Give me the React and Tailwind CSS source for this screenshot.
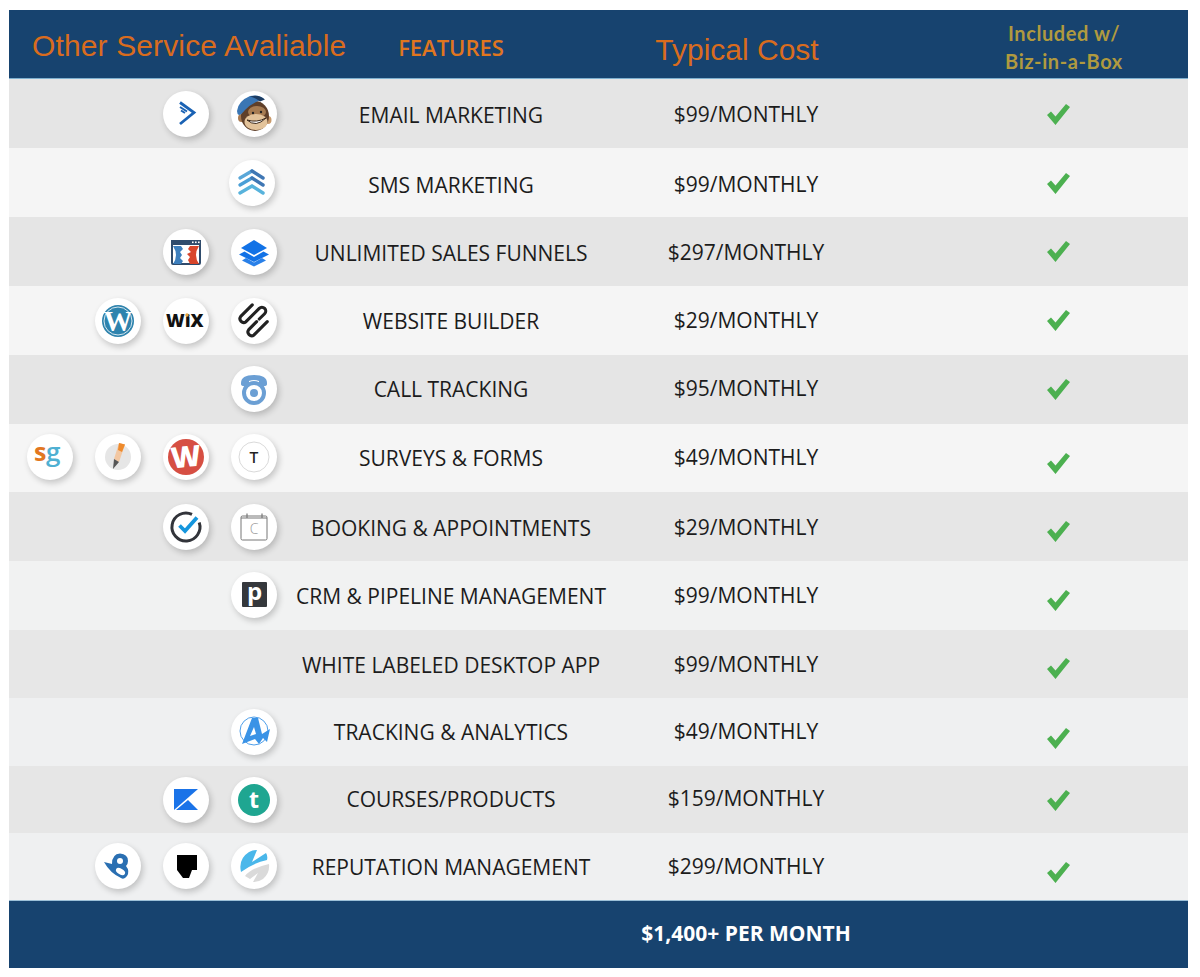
import React from "react";

const Svg = ({ children }) => (
  <svg viewBox="0 0 46 46" className="w-[46px] h-[46px] block">{children}</svg>
);

const Active = () => (
  <Svg>
    <path d="M17 11.5 L31 21.5 L17 33" fill="none" stroke="#1a62b4" strokeWidth="2.8" />
    <path d="M17 16 L24 20.5 M18 19.5 L22 22" fill="none" stroke="#1a62b4" strokeWidth="2" />
  </Svg>
);
const Chimp = () => (
  <Svg>
    <ellipse cx="10.5" cy="27" rx="3.5" ry="4" fill="#a8794f" />
    <ellipse cx="37" cy="29" rx="3.5" ry="4" fill="#c99a6b" />
    <ellipse cx="24" cy="25" rx="14" ry="15" fill="#5f3f29" />
    <ellipse cx="26" cy="21" rx="9" ry="6" fill="#a77c52" />
    <ellipse cx="25" cy="31" rx="11.5" ry="8" fill="#e3c39a" />
    <path d="M16 29 Q25 37 35 27 Q26 32 16 29Z" fill="#fff" stroke="#3a2718" strokeWidth="1" />
    <circle cx="22" cy="22" r="1.2" fill="#222" />
    <circle cx="30" cy="21" r="1.2" fill="#222" />
    <path d="M6 20 Q7 10 19 5 Q28 3 33 8 Q22 11 14 19 Q10 24 8 24 Q6 23 6 20Z" fill="#3a76b4" />
    <path d="M19 5.5 Q28 3 34 8.5 L29 10.5 Q25 7 19 5.5Z" fill="#1d3d63" />
  </Svg>
);
const Sms = () => (
  <Svg>
    <g fill="none" strokeWidth="3.4" strokeLinecap="round">
      <path d="M11 18 L23 11" stroke="#5aa7d8" />
      <path d="M11 25 L23 18" stroke="#4a9fd6" />
      <path d="M11 33 L23 26 L34 33" stroke="#58b3dc" />
    </g>
    <path d="M23 11 L34 18 M23 18 L34 25" stroke="#3f77b4" strokeWidth="3.4" strokeLinecap="round" />
  </Svg>
);
const Click = () => (
  <Svg>
    <rect x="9" y="12" width="28" height="23" rx="1" fill="#fff" stroke="#2f4b6c" strokeWidth="2" />
    <rect x="8" y="11" width="30" height="5" fill="#2f4b6c" />
    <g fill="#fff"><rect x="29" y="12.5" width="1.6" height="1.6" /><rect x="32" y="12.5" width="1.6" height="1.6" /><rect x="35" y="12.5" width="1.6" height="1.6" /></g>
    <path d="M10 17 H18 L20 20 L17 23 L19 26 L17 29 L20 32 L18 35 H10 Q16 26 10 17Z" fill="#3d7fbd" />
    <path d="M36 17 H27 L25 20 L28 23 L24 25 L27 28 L25 31 L27 35 H36 Q30 26 36 17Z" fill="#d8452b" />
  </Svg>
);
const Layers = () => (
  <Svg>
    <path d="M23 11 L36 19 L23 26 L10 19Z" fill="#1272e6" />
    <path d="M13.5 22.5 L23 28 L32.5 22.5 L38 25.5 L23 33 L8 25.5Z" fill="#1272e6" />
    <path d="M15 29 L23 33.5 L31 29 L35 31.5 L23 37.5 L11 31.5Z" fill="#1272e6" opacity=".9" />
  </Svg>
);
const WP = () => (
  <Svg>
    <circle cx="23" cy="23" r="16" fill="#2e83ad" />
    <circle cx="23" cy="23" r="14" fill="none" stroke="#fff" strokeWidth=".8" />
    <text x="23" y="33" textAnchor="middle" fontFamily="Liberation Serif, serif" fontWeight="700" fontSize="29" fill="#fff">W</text>
  </Svg>
);
const Wix = () => (
  <Svg>
    <text x="3" y="29" fontFamily="Open Sans, sans-serif" fontWeight="800" fontSize="18" fill="#111">W</text>
    <text x="22" y="29" fontFamily="Open Sans, sans-serif" fontWeight="800" fontSize="17" fill="#111">i</text>
    <circle cx="24" cy="17" r="1.7" fill="#e8a33d" />
    <text x="27.5" y="29" fontFamily="Open Sans, sans-serif" fontWeight="800" fontSize="18" fill="#111">X</text>
  </Svg>
);
const Square = () => (
  <Svg>
    <g transform="translate(23 21) scale(1.25) translate(-23 -21)" fill="none" stroke="#222" strokeWidth="2.5" strokeLinecap="round" strokeLinejoin="round">
      <path d="M21.6 9.7 L12.4 18.9 A3 3 0 0 0 16.6 23.1 L27.2 12.5 A3 3 0 0 1 31.5 16.8 L27.2 21" />
      <path d="M33.6 23.1 L23 33.7 A3 3 0 0 1 18.8 29.5 L25.1 23.1" />
    </g>
  </Svg>
);
const Phone = () => (
  <Svg>
    <path d="M10 17 Q10 9 23 9 Q36 9 36 17 L36 18 Q36 20 33 20 L30 20 Q28 20 28 18 L28 15 Q23 13 18 15 L18 18 Q18 20 16 20 L13 20 Q10 20 10 18Z" fill="#6b9fd4" />
    <circle cx="23" cy="27" r="10" fill="none" stroke="#6b9fd4" strokeWidth="4" />
    <circle cx="23" cy="27" r="4" fill="#6b9fd4" />
  </Svg>
);
const Sg = () => (
  <Svg>
    <text x="7" y="27" fontFamily="Open Sans, sans-serif" fontWeight="700" fontSize="25" fill="#e2771f">s</text>
    <text x="19" y="27" fontFamily="Open Sans, sans-serif" fontWeight="600" fontSize="26" fill="#4fb0d2">g</text>
  </Svg>
);
const Pencil = () => (
  <Svg>
    <circle cx="23" cy="23" r="13" fill="#e6e6e6" />
    <path d="M24 9 L30 10.5 L24 28 L19 25Z" fill="#f2c7a2" />
    <path d="M24 9 L30 10.5 L27 18 L23 16Z" fill="#ee8a2c" />
    <path d="M19 25 L24 28 L18 35Z" fill="#555" />
  </Svg>
);
const Wufoo = () => (
  <Svg>
    <circle cx="23" cy="23" r="18" fill="#d64f43" />
    <text x="23" y="33" textAnchor="middle" fontFamily="Open Sans, sans-serif" fontWeight="800" fontSize="29" fill="#fff" transform="rotate(-6 23 23)">W</text>
  </Svg>
);
const Type = () => (
  <Svg>
    <circle cx="23" cy="23" r="15" fill="#fff" stroke="#c8c8c8" strokeWidth=".7" />
    <text x="23" y="29" textAnchor="middle" fontFamily="Inter, sans-serif" fontWeight="500" fontSize="15" fill="#222">T</text>
  </Svg>
);
const Clock = () => (
  <Svg>
    <path d="M29 10.4 A14 14 0 1 0 36.2 18.5" fill="none" stroke="#32343a" strokeWidth="3" />
    <path d="M16.5 21.5 L22 27 L34 13.5" fill="none" stroke="#1596dd" strokeWidth="3.8" />
  </Svg>
);
const Cal = () => (
  <Svg>
    <rect x="10" y="12" width="26" height="24" rx="1.5" fill="none" stroke="#777" strokeWidth="1" />
    <path d="M10 14 H36" stroke="#777" strokeWidth="1" />
    <path d="M16 9.5 V14 M31 9.5 V14" stroke="#777" strokeWidth="1.2" />
    <text x="23" y="30" textAnchor="middle" fontFamily="Open Sans, sans-serif" fontWeight="300" fontSize="14" fill="#999">C</text>
  </Svg>
);
const Pipe = () => (
  <Svg>
    <rect x="11" y="10" width="25" height="25" rx="1" fill="#35383c" />
    <text x="23.5" y="27.5" textAnchor="middle" fontFamily="Open Sans, sans-serif" fontWeight="700" fontSize="24" fill="#fff">p</text>
  </Svg>
);
const Alpha = () => (
  <Svg>
    <circle cx="23" cy="22" r="14" fill="none" stroke="#3a93e6" strokeWidth=".9" />
    <path d="M21 9 L27 9 L31 25 L39 20 L36 33 L32 29 L28 35 L24 30 L11 35Z M23 18 L19 27 L25 25Z" fill="#3a93e6" fillRule="evenodd" />
  </Svg>
);
const Kajabi = () => (
  <Svg>
    <path d="M11 12 H35 L11 33Z" fill="#1a73e8" />
    <path d="M25 23 L35 33 H13Z" fill="#1a73e8" />
  </Svg>
);
const Teach = () => (
  <Svg>
    <circle cx="23" cy="23" r="16" fill="#1fa691" />
    <text x="23" y="31" textAnchor="middle" fontFamily="Open Sans, sans-serif" fontWeight="700" fontSize="23" fill="#fff">t</text>
  </Svg>
);
const Bird = () => (
  <Svg>
    <path d="M9 19 L17 21 Q17 11 25 10.5 Q33 11 33 18 Q33 21 31 23 Q35 28 32 33 Q29 37 26 35 Q15 30 9 19Z" fill="#2a6fb2" />
    <circle cx="25" cy="18" r="3" fill="#fff" />
    <ellipse cx="25.5" cy="28.5" rx="5" ry="2.8" fill="#fff" transform="rotate(30 25.5 28.5)" />
  </Svg>
);
const Four = () => (
  <Svg>
    <path d="M14 12 H34 V27 H29 L26 35 H20 L14 27Z" fill="#000" />
  </Svg>
);
const Swift = () => (
  <Svg>
    <path d="M10 29 Q7 16 18 9 Q22 7 26 7 L21 19 L35 10 Q37 13 36 17 Q22 20 10 29Z" fill="#4ab7ea" />
    <path d="M14 33 Q20 25 38 21 Q39 30 32 36 Q28 39 22 39 L27 30 L19 36Z" fill="#dadada" />
  </Svg>
);

const Icon = ({ I }) => (
  <div className="w-[46px] h-[46px] rounded-full bg-white shadow-[2px_3px_6px_rgba(0,0,0,0.2)] shrink-0">
    <I />
  </div>
);

const Check = () => (
  <svg viewBox="0 0 24 22" className="w-[24px] h-[22px] block">
    <path d="M1 12 L5 8.5 L9.5 13.5 L20 1 L24 4 L9.5 22Z" fill="#4cb050" />
  </svg>
);

const rows = [
  { icons: [Active, Chimp], f: "EMAIL MARKETING", c: "$99/MONTHLY", bg: "bg-[#e5e5e5]", h: "h-[69px]", ci: "pb-0", fp: "pt-[3px]", cp: "pt-0", kp: "pt-0" },
  { icons: [Sms], f: "SMS MARKETING", c: "$99/MONTHLY", bg: "bg-[#f5f5f5]", h: "h-[69px]", ci: "mr-[2px]", fp: "pt-[4px]", cp: "pt-[2px]", kp: "pb-0" },
  { icons: [Click, Layers], f: "UNLIMITED SALES FUNNELS", c: "$297/MONTHLY", bg: "bg-[#e5e5e5]", h: "h-[69px]", ci: "pb-0", fp: "pt-[2px]", cp: "pt-0", kp: "pb-[2px]" },
  { icons: [WP, Wix, Square], f: "WEBSITE BUILDER", c: "$29/MONTHLY", bg: "bg-[#f5f5f5]", h: "h-[69px]", ci: "pb-0", fp: "pt-[1px]", cp: "pb-[1px]", kp: "pb-[1px]" },
  { icons: [Phone], f: "CALL TRACKING", c: "$95/MONTHLY", bg: "bg-[#e5e5e5]", h: "h-[69px]", ci: "pb-[1px]", fp: "pb-[1px]", cp: "pb-[3px]", kp: "pb-[1px]" },
  { icons: [Sg, Pencil, Wufoo, Type], f: "SURVEYS & FORMS", c: "$49/MONTHLY", bg: "bg-[#f5f5f5]", h: "h-[68px]", ci: "pb-[2px]", fp: "pt-0", cp: "pb-[3px]", kp: "pt-[9px]" },
  { icons: [Clock, Cal], f: "BOOKING & APPOINTMENTS", c: "$29/MONTHLY", bg: "bg-[#e6e6e6]", h: "h-[69px]", ci: "pt-0", fp: "pt-[2px]", cp: "pt-0", kp: "pt-[9px]" },
  { icons: [Pipe], f: "CRM & PIPELINE MANAGEMENT", c: "$99/MONTHLY", bg: "bg-[#f1f2f2]", h: "h-[69px]", ci: "pb-[2px]", fp: "pt-[1px]", cp: "pb-[1px]", kp: "pt-[9px]" },
  { icons: [], f: "WHITE LABELED DESKTOP APP", c: "$99/MONTHLY", bg: "bg-[#e7e7e7]", h: "h-[68px]", ci: "", fp: "pt-[2px]", cp: "pt-0", kp: "pt-[8px]" },
  { icons: [Alpha], f: "TRACKING & ANALYTICS", c: "$49/MONTHLY", bg: "bg-[#eff0f1]", h: "h-[68px]", ci: "pb-0", fp: "pt-0", cp: "pb-[2px]", kp: "pt-[12px]" },
  { icons: [Kajabi, Teach], f: "COURSES/PRODUCTS", c: "$159/MONTHLY", bg: "bg-[#e6e6e6]", h: "h-[67px]", ci: "pb-0", fp: "pb-[1px]", cp: "pb-[4px]", kp: "pt-0" },
  { icons: [Bird, Four, Swift], f: "REPUTATION MANAGEMENT", c: "$299/MONTHLY", bg: "bg-[#eff0f1]", h: "h-[67px]", ci: "pb-[1px]", fp: "pt-[1px]", cp: "pb-[2px]", kp: "pt-[10px]" },
];

export default function App() {
  return (
    <div className="w-[1200px] h-[977px] bg-white pt-[10px] pl-[9px] font-['Open_Sans',sans-serif]">
      <div className="w-[1179px]">
        <div className="h-[69px] bg-[#17436f] border-b border-[#7fb0cf] grid grid-cols-[276px_332px_258px_1fr] items-center">
          <div className="font-['Liberation_Sans',sans-serif] text-[30px] tracking-[0.13px] leading-none text-[#d96c1e] pl-[23px] whitespace-nowrap pt-[3px]">Other Service Avaliable</div>
          <div className="text-center text-[22px] font-semibold text-[#e0761f] pt-[6px]">FEATURES</div>
          <div className="text-center font-['Liberation_Sans',sans-serif] text-[30px] text-[#d96c1e] pr-[18px] pt-[10px]">Typical Cost</div>
          <div className="text-center font-['Lato',sans-serif] font-bold text-[20px] tracking-[0.6px] leading-[28px] text-[#b09a3f] pl-[65px] pt-[5px]">
            <div>Included w/</div>
            <div>Biz-in-a-Box</div>
          </div>
        </div>
        {rows.map((r) => (
          <div key={r.f} className={`${r.h} ${r.bg} grid grid-cols-[276px_332px_258px_1fr] items-center`}>
            <div className={`flex justify-end items-center gap-[22px] pr-[8px] ${r.ci}`}>
              {r.icons.map((I, i) => <Icon key={i} I={I} />)}
            </div>
            <div className={`text-center text-[21px] leading-[28px] text-[#1c1c1c] whitespace-nowrap ${r.fp}`}>{r.f}</div>
            <div className={`text-center text-[21px] leading-[28px] text-[#1c1c1c] whitespace-nowrap ${r.cp}`}>{r.c}</div>
            <div className={`flex justify-center pl-[53px] ${r.kp}`}><Check /></div>
          </div>
        ))}
        <div className="h-[68px] bg-[#17436f] border-t border-[#9cc0d8] grid grid-cols-[276px_332px_258px_1fr] items-center">
          <div />
          <div />
          <div className="text-center text-[21px] font-bold text-white whitespace-nowrap pb-[2px]">$1,400+ PER MONTH</div>
          <div />
        </div>
      </div>
    </div>
  );
}
